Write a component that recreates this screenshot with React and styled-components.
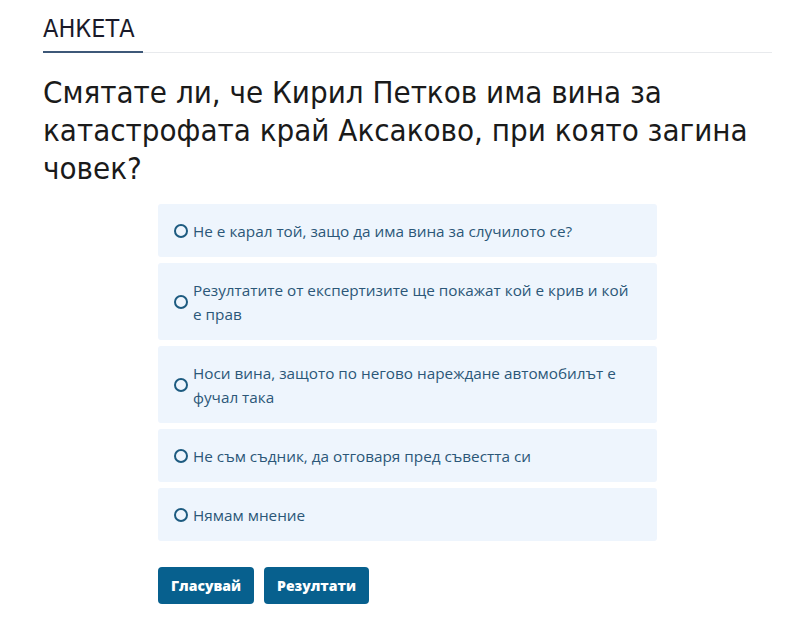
import React from 'react';
import styled, { createGlobalStyle } from 'styled-components';

const GlobalStyle = createGlobalStyle`
  body {
    margin: 0;
    background: #fff;
    font-family: "Open Sans", "Noto Sans", sans-serif;
  }
`;

const PollContainer = styled.div`
  width: 729px;
  padding: 16px 0 0 43px;
`;

const Header = styled.div`
  position: relative;
  border-bottom: 1px solid #e8eaed;
  padding-bottom: 10px;
`;

const HeaderTitle = styled.h3`
  margin: 0;
  font-family: "DejaVu Sans Condensed", sans-serif;
  font-weight: 400;
  font-size: 25px;
  line-height: 26px;
  color: #1a1a2a;

  &::after {
    content: '';
    position: absolute;
    left: 0;
    bottom: -1px;
    width: 100px;
    height: 2px;
    background: #3d5878;
  }
`;

const Question = styled.h2`
  margin: 20px 0 17px;
  font-family: "DejaVu Sans Condensed", sans-serif;
  font-weight: 400;
  font-size: 31px;
  line-height: 38px;
  color: #1a1a1a;
`;

const Options = styled.div`
  width: 499px;
  margin: 0 auto;
  display: flex;
  flex-direction: column;
  gap: 6px;
`;

const Option = styled.label`
  display: flex;
  align-items: center;
  gap: 5px;
  padding: 14.5px 24px 14.5px 16px;
  background: #eef5fd;
  border-radius: 3px;
  cursor: pointer;
`;

const Radio = styled.span`
  flex: none;
  width: 14px;
  height: 14px;
  box-sizing: border-box;
  border: 2.5px solid #1d5b80;
  border-radius: 50%;
`;

const OptionText = styled.span`
  font-size: 15.3px;
  line-height: 24px;
  color: #2b5778;
`;

const Buttons = styled.div`
  width: 499px;
  margin: 26px auto 0;
  display: flex;
  gap: 10px;
`;

const Button = styled.button`
  height: 37px;
  padding: 0 13px;
  border: none;
  border-radius: 4px;
  background: #07608e;
  color: #fff;
  font-family: "Open Sans", sans-serif;
  font-weight: 800;
  font-size: 14px;
  cursor: pointer;
`;

const answers = [
  'Не е карал той, защо да има вина за случилото се?',
  'Резултатите от експертизите ще покажат кой е крив и кой е прав',
  'Носи вина, защото по негово нареждане автомобилът е фучал така',
  'Не съм съдник, да отговаря пред съвестта си',
  'Нямам мнение',
];

const App = () => {
  return (
    <PollContainer>
      <GlobalStyle />
      <Header>
        <HeaderTitle>АНКЕТА</HeaderTitle>
      </Header>
      <Question>
        Смятате ли, че Кирил Петков има вина за катастрофата край Аксаково, при която загина човек?
      </Question>
      <Options>
        {answers.map(answer => (
          <Option key={answer}>
            <Radio />
            <OptionText>{answer}</OptionText>
          </Option>
        ))}
      </Options>
      <Buttons>
        <Button>Гласувай</Button>
        <Button>Резултати</Button>
      </Buttons>
    </PollContainer>
  );
};

export default App;
